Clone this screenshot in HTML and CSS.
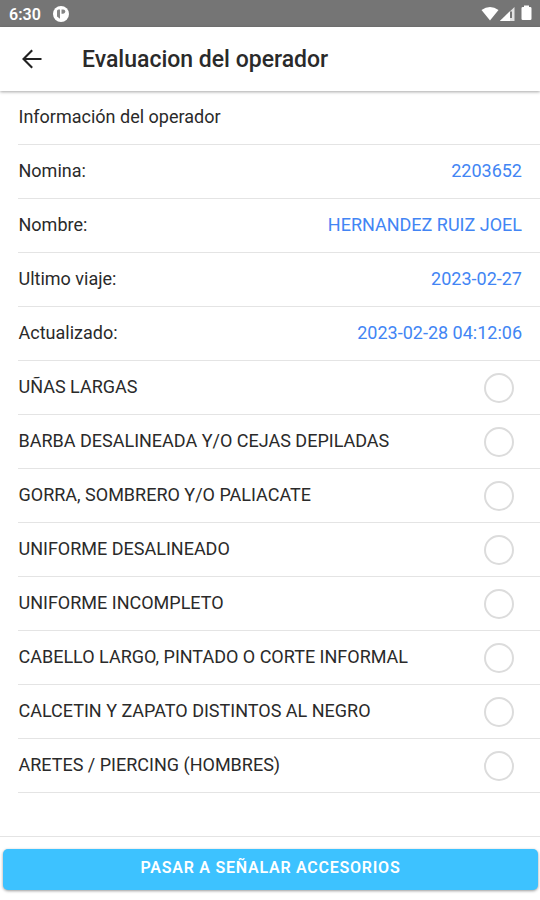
FILE: index.html
```html
<!DOCTYPE html>
<html lang="es">
<head>
    <meta charset="UTF-8">
    <meta name="viewport" content="width=device-width, initial-scale=1.0">
    <title>Evaluacion del operador</title>
    <link rel="stylesheet" href="styles.css">
</head>
<body>

<!-- Barra de estado -->
<div class="status-bar">
    <span class="time">6:30</span>
    <svg class="app-icon" width="16" height="16" viewBox="0 0 16 16">
        <circle cx="8" cy="8" r="8" fill="#fff"/>
        <path d="M7 3.500H5.500q-1.500 0-1.500 1.500v5.500l3 2.300z" fill="#858585"/>
        <path d="M8.500 3.500h1.700a2.100 2.100 0 0 1 0 4.200h-1.700z" fill="#858585"/>
    </svg>
    <svg class="system-icons" width="52" height="18" viewBox="0 0 52 18">
        <path d="M1.500 5Q10 -1 18.500 5L10 15.500z" fill="#fff"/>
        <path d="M20 16L34.500 2v14z" fill="#e2e2e2"/>
        <path d="M20 16L30 6.300v9.700z" fill="#fff"/>
        <path d="M31 6.500v6.500" stroke="#757575" stroke-width="2"/>
        <path d="M44 .5h5v1.500h1.200q1.300 0 1.300 1.300v10.400q0 1.300-1.300 1.300h-7.400q-1.300 0-1.300-1.300v-10.400q0-1.300 1.300-1.300h1.200z" fill="#fff"/>
    </svg>
</div>

<header class="header">
    <svg class="back" width="20" height="20" viewBox="0 0 20 20">
        <path d="M19.500 10H1.500M10.200 1.200L1.500 10l8.700 8.800" fill="none" stroke="#222" stroke-width="2.100"/>
    </svg>
    <h1>Evaluacion del operador</h1>
</header>

<main class="content">
    <!-- Datos del operador -->
    <div class="item"><span class="label">Información del operador</span></div>
    <div class="item"><span class="label">Nomina:</span><span class="value">2203652</span></div>
    <div class="item"><span class="label">Nombre:</span><span class="value">HERNANDEZ RUIZ JOEL</span></div>
    <div class="item"><span class="label">Ultimo viaje:</span><span class="value">2023-02-27</span></div>
    <div class="item"><span class="label">Actualizado:</span><span class="value">2023-02-28 04:12:06</span></div>

    <!-- Evaluacion -->
    <label class="item"><span class="label">UÑAS LARGAS</span><input type="checkbox" class="check"></label>
    <label class="item"><span class="label">BARBA DESALINEADA Y/O CEJAS DEPILADAS</span><input type="checkbox" class="check"></label>
    <label class="item"><span class="label">GORRA, SOMBRERO Y/O PALIACATE</span><input type="checkbox" class="check"></label>
    <label class="item"><span class="label">UNIFORME DESALINEADO</span><input type="checkbox" class="check"></label>
    <label class="item"><span class="label">UNIFORME INCOMPLETO</span><input type="checkbox" class="check"></label>
    <label class="item"><span class="label">CABELLO LARGO, PINTADO O CORTE INFORMAL</span><input type="checkbox" class="check"></label>
    <label class="item"><span class="label">CALCETIN Y ZAPATO DISTINTOS AL NEGRO</span><input type="checkbox" class="check"></label>
    <label class="item"><span class="label">ARETES / PIERCING (HOMBRES)</span><input type="checkbox" class="check"></label>
</main>

<footer class="footer">
    <button class="next">PASAR A SEÑALAR ACCESORIOS</button>
</footer>

</body>
</html>
```
FILE: styles.css
```css
* {
    box-sizing: border-box;
}
body {
    margin: 0;
    height: 100vh;
    display: flex;
    flex-direction: column;
    overflow: hidden;
    font-family: Roboto, sans-serif;
    color: #2a2a2a;
    background-color: #fff;
}
.status-bar {
    height: 27px;
    flex: none;
    display: flex;
    align-items: center;
    padding: 0 8px 0 9px;
    background-color: #757575;
    color: #fff;
}
.time {
    font-size: 16px;
    font-weight: 600;
    line-height: 27px;
    width: 44px;
    padding-top: 1px;
}
.system-icons {
    margin-left: auto;
}
.header {
    height: 64px;
    flex: none;
    display: flex;
    align-items: center;
    padding-left: 22px;
    box-shadow: 0 1px 3px rgba(0, 0, 0, 0.35);
    z-index: 1;
}
h1 {
    margin: 0 0 0 40px;
    font-size: 23px;
    font-weight: 500;
}
.content {
    flex: 1;
    margin-top: -1px;
}
.item {
    height: 54px;
    margin-left: 18px;
    padding: 0 18px 1px 0;
    display: flex;
    align-items: center;
    justify-content: space-between;
    box-shadow: 0 1px 0 #e4e4e4;
    font-size: 18px;
}
.label {
    padding-left: 0.5px;
}
.value {
    color: #4285f4;
}
.check {
    appearance: none;
    width: 30px;
    height: 30px;
    margin: 2px 8.5px 0 0;
    border: 2px solid #dcdcdc;
    border-radius: 50%;
}
.footer {
    height: 64px;
    flex: none;
    padding: 12px 2px 0 3px;
    border-top: 1px solid #e4e4e4;
}
.next {
    display: block;
    width: 100%;
    height: 41px;
    padding: 0 0 4px;
    border: none;
    border-radius: 5px;
    background-color: #3dc2ff;
    box-shadow: 0 1px 3px rgba(0, 0, 0, 0.4);
    color: #fff;
    font-family: inherit;
    font-size: 16px;
    font-weight: 600;
    letter-spacing: 0.75px;
}
```
